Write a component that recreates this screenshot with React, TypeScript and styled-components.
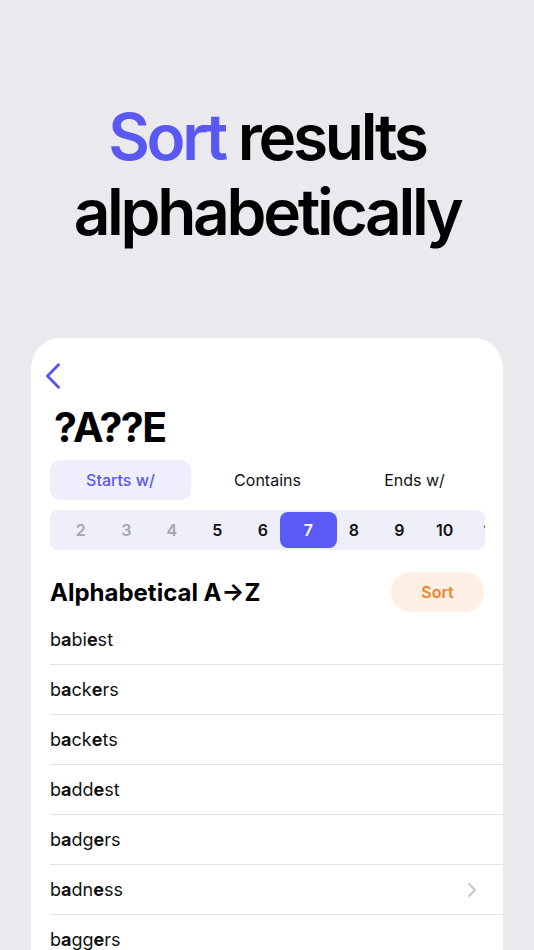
import React from "react";
import styled, { createGlobalStyle } from "styled-components";

const Global = createGlobalStyle`
  html, body { margin: 0; padding: 0; }
  body {
    background: #E9E9EE;
    font-family: Inter, "Noto Sans", sans-serif;
    color: #000;
    height: 950px;
    overflow: hidden;
  }
  * { box-sizing: border-box; }
`;

const Page = styled.div`
  width: 534px;
  height: 950px;
  display: flex;
  flex-direction: column;
  align-items: center;
  overflow: hidden;
`;

const Headline = styled.h1`
  margin: 99px 0 0;
  font-family: Inter, sans-serif;
  font-weight: 600;
  font-size: 64px;
  line-height: 75px;
  letter-spacing: -3.3px;
  text-align: center;
  color: #000;
`;

const Accent = styled.span`
  color: #5A58F2;
`;

const Card = styled.div`
  margin-top: 89px;
  width: 472px;
  flex: 1;
  background: #fff;
  border-radius: 30px 30px 0 0;
  padding: 25px 0 0 19px;
  display: flex;
  flex-direction: column;
`;

const Inner = styled.div`
  padding-right: 19px;
  display: flex;
  flex-direction: column;
`;

const BackButton = styled.div`
  margin-left: -6px;
  width: 20px;
  height: 24px;
  display: flex;
  color: #5A58F2;
`;

const Pattern = styled.div`
  margin-top: 16px;
  padding-left: 4px;
  font-size: 41px;
  font-weight: 700;
  line-height: 48px;
  letter-spacing: -1.5px;
`;

const Segments = styled.div`
  margin-top: 9px;
  display: grid;
  grid-template-columns: 141px 141px 141px;
  column-gap: 6px;
`;

const Segment = styled.div<{ $active?: boolean }>`
  height: 40px;
  border-radius: 10px;
  display: flex;
  align-items: center;
  justify-content: center;
  font-size: 16px;
  font-weight: ${(p) => (p.$active ? 500 : 400)};
  color: ${(p) => (p.$active ? "#5A58F2" : "#111")};
  background: ${(p) => (p.$active ? "#EEEEFC" : "transparent")};
`;

const Strip = styled.div`
  margin-top: 10px;
  height: 40px;
  width: 435px;
  border-radius: 8px;
  background: #EFEFFC;
  overflow: hidden;
  display: flex;
  padding-left: 8px;
`;

const Num = styled.div<{ $tone: "muted" | "normal" | "active" }>`
  position: relative;
  flex: 0 0 45.5px;
  height: 40px;
  display: flex;
  align-items: center;
  justify-content: center;
  font-size: 16px;
  font-weight: 600;
  color: ${(p) =>
    p.$tone === "muted" ? "#A6A6AE" : p.$tone === "active" ? "#fff" : "#111"};
  &::before {
    content: "";
    display: ${(p) => (p.$tone === "active" ? "block" : "none")};
    position: absolute;
    top: 2px;
    bottom: 2px;
    left: -5.75px;
    right: -5.75px;
    border-radius: 8px;
    background: #5A5AF5;
  }
  span {
    position: relative;
  }
`;

const Header = styled.div`
  margin-top: 22px;
  display: flex;
  align-items: center;
  justify-content: space-between;
  height: 40px;
`;

const HeaderTitle = styled.div`
  font-size: 24px;
  font-weight: 700;
  letter-spacing: 0px;
`;

const SortButton = styled.div`
  width: 93px;
  height: 40px;
  border-radius: 20px;
  background: #FEEFE4;
  color: #F0842A;
  font-size: 16px;
  font-weight: 600;
  display: flex;
  align-items: center;
  justify-content: center;
`;

const List = styled.div`
  margin-top: 3px;
  display: flex;
  flex-direction: column;
`;

const Row = styled.div`
  height: 50px;
  border-bottom: 1px solid #E2E2E6;
  display: flex;
  align-items: center;
  justify-content: space-between;
  padding-right: 26px;
  font-size: 18px;
  font-weight: 400;
  color: #111;
`;

const Word = styled.div`
  letter-spacing: 0px;
`;

const Strong = styled.b`
  font-weight: 700;
`;

const Chevron = styled.div`
  display: flex;
  color: #C4C4C8;
`;

const nums = [2, 3, 4, 5, 6, 7, 8, 9, 10, 11];
const words = ["babiest", "backers", "backets", "baddest", "badgers", "badness", "baggers"];

function renderWord(w: string) {
  return w.split("").map((c, i) =>
    i === 1 || i === 4 ? <Strong key={i}>{c}</Strong> : <React.Fragment key={i}>{c}</React.Fragment>
  );
}

export default function App() {
  return (
    <Page>
      <Global />
      <Headline>
        <Accent>Sort</Accent> results
        <br />
        alphabetically
      </Headline>
      <Card>
        <Inner>
          <BackButton>
            <svg width="20" height="26" viewBox="0 0 20 26" fill="none">
              <path d="M14.5 1.8 L3.5 13 L14.5 24.2" stroke="currentColor" strokeWidth="3" strokeLinecap="round" strokeLinejoin="round" />
            </svg>
          </BackButton>
          <Pattern>?A??E</Pattern>
          <Segments>
            <Segment $active>Starts w/</Segment>
            <Segment>Contains</Segment>
            <Segment>Ends w/</Segment>
          </Segments>
          <Strip>
            {nums.map((n) => (
              <Num key={n} $tone={n < 5 ? "muted" : n === 7 ? "active" : "normal"}>
                <span>{n}</span>
              </Num>
            ))}
          </Strip>
          <Header>
            <HeaderTitle>Alphabetical A→Z</HeaderTitle>
            <SortButton>Sort</SortButton>
          </Header>
        </Inner>
        <List>
          {words.map((w) => (
            <Row key={w}>
              <Word>{renderWord(w)}</Word>
              {w === "badness" && (
                <Chevron>
                  <svg width="10" height="16" viewBox="0 0 10 16" fill="none">
                    <path d="M2 2 L8 8 L2 14" stroke="currentColor" strokeWidth="1.8" strokeLinecap="round" strokeLinejoin="round" />
                  </svg>
                </Chevron>
              )}
            </Row>
          ))}
        </List>
      </Card>
    </Page>
  );
}
